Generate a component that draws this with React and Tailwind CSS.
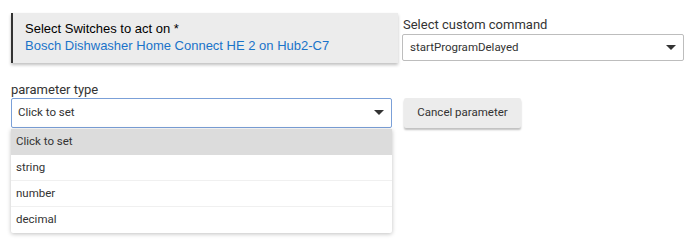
import React from 'react';

function Caret() {
  return (
    <svg width="10" height="6" viewBox="0 0 10 6" className="shrink-0">
      <path d="M0 0 L10 0 L5 5 Z" fill="#333" />
    </svg>
  );
}

function App() {
  const options = ['string', 'number', 'decimal'];
  return (
    <div className="w-[690px] h-[244px] bg-white relative font-['Roboto',sans-serif] text-[#333]">
      <div className="flex pt-[13px] pl-[11px]">
        <div className="w-[387px] h-[50px] bg-[#ececec] border-l-2 border-[#333] shadow-[0_2px_3px_rgba(0,0,0,0.25)] pl-[12px] pt-[7px] font-['Liberation_Sans',Arial,sans-serif] text-[13px] leading-[17px]">
          <div className="text-black">Select Switches to act on *</div>
          <div className="text-[#1a73c9]">Bosch Dishwasher Home Connect HE 2 on Hub2-C7</div>
        </div>
        <div className="ml-[4px] w-[282px]">
          <div className="text-[13px] leading-[16px] pt-[4px] pl-px">Select custom command</div>
          <div className="mt-px h-[27px] border border-[#bdbdbd] rounded-[2px] flex items-center justify-between pl-[7px] pr-[7px] text-[11.5px]">
            <span>startProgramDelayed</span>
            <Caret />
          </div>
        </div>
      </div>

      <div className="flex pl-[11px] mt-[20px]">
        <div className="w-[381px]">
          <div className="text-[13px] leading-[14px]">parameter type</div>
          <div className="mt-px h-[30px] border border-[#7ba0d8] rounded-[2px] flex items-center justify-between pl-[6px] pr-[7px] text-[11.5px]">
            <span>Click to set</span>
            <Caret />
          </div>
          <div className="mt-px bg-white shadow-[0_1px_4px_rgba(0,0,0,0.25)] rounded-b-[2px] text-[11.5px]">
            <div className="h-[26px] bg-[#dcdcdc] flex items-center pl-[5px]">Click to set</div>
            {options.map((o, i) => (
              <div
                key={o}
                className={`h-[26px] flex items-center pl-[5px] ${i < options.length - 1 ? 'border-b border-[#f0f0f0]' : ''}`}
              >
                {o}
              </div>
            ))}
          </div>
        </div>
        <div className="ml-[12px] pt-[15px]">
          <button className="w-[117px] h-[30px] bg-[#ececec] rounded-[2px] shadow-[0_2px_2px_rgba(0,0,0,0.25)] text-[11.5px] text-[#333]">
            Cancel parameter
          </button>
        </div>
      </div>
    </div>
  );
}

export default App;
